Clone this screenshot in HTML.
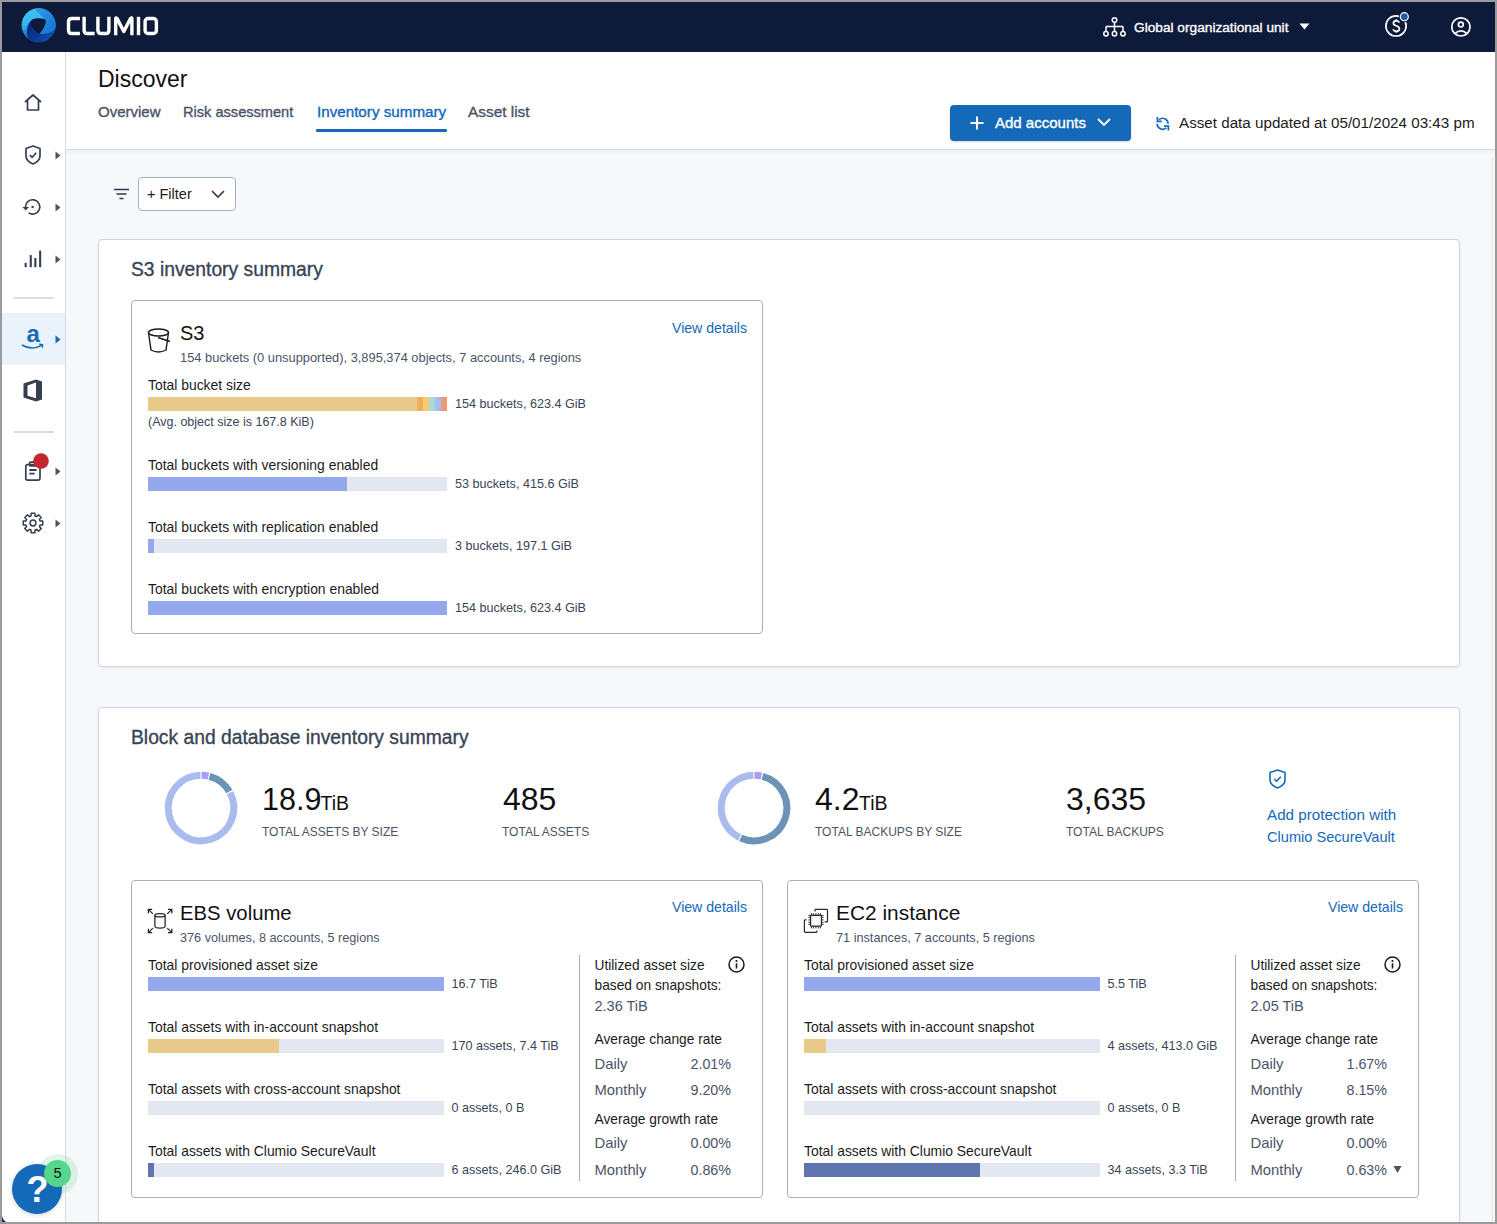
<!DOCTYPE html>
<html><head><meta charset="utf-8"><style>
html,body{margin:0;padding:0;}
body{width:1497px;height:1224px;overflow:hidden;background:#9a9a9a;position:relative;font-family:"Liberation Sans",sans-serif;}
.a{position:absolute;}
.t{position:absolute;white-space:nowrap;line-height:1;}
.m{-webkit-text-stroke:0.35px currentColor;}
.s{-webkit-text-stroke:0.15px currentColor;}
svg{position:absolute;overflow:visible;}
</style></head><body>
<div class="a" style="left:2px;top:2px;width:1493px;height:1220px;background:#f7f8fa;"></div>
<div class="a" style="left:2px;top:2px;width:1493px;height:50px;background:#0e1a39;"></div>
<div class="a" style="left:2px;top:52px;width:63px;height:1170px;background:#fff;"></div>
<div class="a" style="left:65px;top:52px;width:1px;height:1170px;background:#d3dbea;"></div>
<div class="a" style="left:66px;top:52px;width:1429px;height:97px;background:#fff;"></div>
<div class="a" style="left:66px;top:149px;width:1429px;height:1px;background:#d3dbea;"></div>
<div class="a" style="left:66px;top:150px;width:1429px;height:6px;background:linear-gradient(rgba(30,50,90,0.035),rgba(30,50,90,0));"></div>
<div class="a" style="left:1492px;top:157px;width:1px;height:1065px;background:#e3e3e3;"></div>
<div class="a" style="left:1493px;top:157px;width:2px;height:1065px;background:#f9f9f9;"></div>
<svg style="left:22px;top:8px" width="34" height="35" viewBox="0 0 34 35">
<defs><linearGradient id="lg1" x1="0.2" y1="0.1" x2="0.3" y2="0.9"><stop offset="0" stop-color="#40c2f2"/><stop offset="0.45" stop-color="#36b4ee"/><stop offset="1" stop-color="#1560c8"/></linearGradient>
<linearGradient id="lg3" x1="0" y1="0" x2="1" y2="1"><stop offset="0" stop-color="#2aa0ea"/><stop offset="1" stop-color="#1670d4"/></linearGradient>
<linearGradient id="lg2" x1="0" y1="0.2" x2="1" y2="0.8"><stop offset="0" stop-color="#08267a"/><stop offset="1" stop-color="#1250b0"/></linearGradient></defs>
<circle cx="16.6" cy="17.3" r="17" fill="url(#lg1)"/>
<path d="M12.2 0.9A17 17 0 0 1 33.2 21L20 25L24.2 12.6Z" fill="url(#lg3)"/>
<path d="M8.8 13Q4.6 16.5 4.8 26L6.6 31.05A17 17 0 0 0 33.1 21.4Q26 27 18.4 25.7Z" fill="url(#lg2)"/>
<path d="M8.9 14.2Q8.6 11.6 11.4 10.9Q16 9.7 21.6 10.8Q24.4 11.4 23.8 14.2Q22.6 20.5 17.6 25.2Q16.5 26.2 15.4 25.1Q9.4 20 8.9 14.2Z" fill="#0e1a39"/>
</svg>
<svg style="left:0px;top:0px" width="1" height="1" viewBox="0 0 1 1"><g fill="none" stroke="#fff" stroke-width="3.4">
<path d="M79.9 18.5H71.8Q68.5 18.5 68.5 21.8V30.2Q68.5 33.5 71.8 33.5H79.9"/>
<path d="M84.1 16.8V30.2Q84.1 33.5 87.4 33.5H94.6"/>
<path d="M97.9 16.8V30.2Q97.9 33.5 101.2 33.5H105.6Q108.9 33.5 108.9 30.2V16.8"/>
<path d="M115.7 35.2V18.8Q115.7 17.2 117 18.4L123.8 31.5L130.6 18.4Q131.9 17.2 131.9 18.8V35.2" stroke-linejoin="round"/>
<path d="M138.5 16.8V35.2"/>
<rect x="145.1" y="18.5" width="11.3" height="15" rx="3"/>
</g></svg>
<svg style="left:1103px;top:17px" width="23" height="20" viewBox="0 0 23 20" fill="none" stroke="#fff" stroke-width="1.5">
<circle cx="11.5" cy="3" r="2.3"/><path d="M11.5 5.3V9.5M3 9.5H20M3 9.5V14.5M11.5 9.5V14.5M20 9.5V14.5"/>
<circle cx="3" cy="16.7" r="2.2"/><circle cx="11.5" cy="16.7" r="2.2"/><circle cx="20" cy="16.7" r="2.2"/></svg>
<div class="t m" style="left:1134px;top:21.00px;font-size:13.7px;color:#fff;">Global organizational unit</div>
<svg style="left:1299px;top:23px" width="11" height="7" viewBox="0 0 11 7"><path d="M0.5 0.5H10.5L5.5 6.5Z" fill="#fff"/></svg>
<svg style="left:1380px;top:8px" width="34" height="34" viewBox="1380 8 34 34">
<circle cx="1396" cy="25.9" r="10.1" fill="none" stroke="#fff" stroke-width="1.7"/>
<path d="M1399.3 22.6Q1398.6 20.8 1396.3 20.8Q1393.4 20.8 1393.4 23.2Q1393.4 25 1396.3 25.8Q1399.4 26.7 1399.4 29Q1399.4 31.3 1396.3 31.3Q1393.8 31.3 1393 29.4M1396.3 19.3V20.8M1396.3 31.3V32.8" fill="none" stroke="#fff" stroke-width="1.7"/>
<circle cx="1404.3" cy="16.7" r="5.6" fill="#0e1a39"/><circle cx="1404.3" cy="16.7" r="4.6" fill="#fff"/><circle cx="1404.3" cy="16.7" r="3.4" fill="#1d5fa0"/></svg>
<svg style="left:1448px;top:14px" width="26" height="26" viewBox="1448 14 26 26" fill="none" stroke="#fff" stroke-width="1.7">
<circle cx="1460.9" cy="26.9" r="9.1"/><circle cx="1460.8" cy="24.6" r="2.4"/><path d="M1455 33.5Q1460.9 28.2 1466.8 33.5"/></svg>
<svg style="left:24px;top:94px" width="18" height="17" viewBox="0 0 18 17" fill="none" stroke="#353f50" stroke-width="1.7" stroke-linejoin="round">
<path d="M1 8L9 1L17 8M3.5 6V16H14.5V6"/></svg>
<svg style="left:25px;top:145px" width="16" height="20" viewBox="0 0 16 20" fill="none" stroke="#353f50" stroke-width="1.7" stroke-linejoin="round">
<path d="M8 1L15 3.5V11Q15 16 8 19Q1 16 1 11V3.5Z"/><path d="M4.8 10L7.2 12.3L11.3 7.8"/></svg>
<svg style="left:22px;top:199px" width="20" height="17" viewBox="0 0 20 17">
<path d="M3.4 7.9A7.2 7.2 0 1 1 6.6 13.9" fill="none" stroke="#353f50" stroke-width="1.6"/><path d="M0.4 8.1H7L3.7 11.6Z" fill="#353f50"/><circle cx="10.6" cy="7.9" r="1.2" fill="#353f50"/></svg>
<svg style="left:24px;top:250px" width="18" height="18" viewBox="0 0 18 18" fill="#353f50">
<rect x="0.6" y="12.8" width="2.1" height="4.4"/><rect x="5.7" y="5.1" width="2.1" height="12.1"/><rect x="10.3" y="8" width="2.1" height="9.2"/><rect x="15.1" y="0.7" width="2.1" height="16.5"/></svg>
<div class="a" style="left:2px;top:313px;width:63px;height:52px;background:#eaf3fc;"></div>
<svg style="left:55px;top:151px" width="6" height="9" viewBox="0 0 6 9"><path d="M0.5 0.5L5.5 4.5L0.5 8.5Z" fill="#4a5468"/></svg>
<svg style="left:55px;top:203px" width="6" height="9" viewBox="0 0 6 9"><path d="M0.5 0.5L5.5 4.5L0.5 8.5Z" fill="#4a5468"/></svg>
<svg style="left:55px;top:255px" width="6" height="9" viewBox="0 0 6 9"><path d="M0.5 0.5L5.5 4.5L0.5 8.5Z" fill="#4a5468"/></svg>
<svg style="left:55px;top:335px" width="6" height="9" viewBox="0 0 6 9"><path d="M0.5 0.5L5.5 4.5L0.5 8.5Z" fill="#1469b8"/></svg>
<svg style="left:55px;top:467px" width="6" height="9" viewBox="0 0 6 9"><path d="M0.5 0.5L5.5 4.5L0.5 8.5Z" fill="#4a5468"/></svg>
<svg style="left:55px;top:519px" width="6" height="9" viewBox="0 0 6 9"><path d="M0.5 0.5L5.5 4.5L0.5 8.5Z" fill="#4a5468"/></svg>
<div class="a" style="left:14px;top:297px;width:40px;height:1.5px;background:#d5deec;"></div>
<div class="t" style="left:26.5px;top:321.50px;font-size:24px;color:#1469b8;font-weight:bold;">a</div>
<svg style="left:21px;top:342px" width="24" height="8" viewBox="0 0 24 8"><path d="M1 3Q11 9 21 3.2" fill="none" stroke="#1469b8" stroke-width="1.5"/><path d="M18.2 2.2L21.6 2.6L21.2 5.8" fill="none" stroke="#1469b8" stroke-width="1.3"/></svg>
<svg style="left:23px;top:379px" width="20" height="23" viewBox="0 0 20 23" fill="#353f50">
<path d="M0.5 4.5L13 0.5L19 2.5V20.5L13 22.5L0.5 18.5Z M4.5 6.5V16.8L13 19.3V3.5Z" fill-rule="evenodd"/></svg>
<div class="a" style="left:14px;top:431px;width:40px;height:1.5px;background:#d5deec;"></div>
<svg style="left:24px;top:461px" width="18" height="21" viewBox="0 0 18 21" fill="none" stroke="#353f50" stroke-width="1.7" stroke-linejoin="round">
<rect x="1.8" y="3.6" width="14.2" height="15.6" rx="1.6"/><rect x="5.5" y="1.2" width="6.5" height="3.6" rx="1"/><path d="M5.3 9H12.6M5.3 12.6H10.6" stroke-width="1.9"/></svg>
<svg style="left:33px;top:453px" width="17" height="17" viewBox="0 0 17 17"><circle cx="8" cy="8" r="7.8" fill="#c1272e"/></svg>
<svg style="left:22px;top:512px" width="22" height="22" viewBox="0 0 22 22" fill="none" stroke="#353f50" stroke-width="1.5" stroke-linejoin="round">
<path d="M8.98 3.98L9.11 1.28L12.89 1.28L13.01 3.98L14.53 4.61L16.54 2.79L19.21 5.46L17.38 7.46L18.02 8.98L20.72 9.11L20.72 12.89L18.02 13.01L17.39 14.53L19.21 16.54L16.54 19.21L14.54 17.38L13.02 18.02L12.89 20.72L9.11 20.72L8.99 18.02L7.47 17.39L5.46 19.21L2.79 16.54L4.62 14.54L3.98 13.02L1.28 12.89L1.28 9.11L3.98 8.99L4.61 7.47L2.79 5.46L5.46 2.79L7.46 4.62Z"/>
<circle cx="11" cy="11" r="2.9"/></svg>
<div class="t" style="left:98px;top:68.00px;font-size:23px;color:#111;">Discover</div>
<div class="t m" style="left:98px;top:104.00px;font-size:15px;color:#4a5468;">Overview</div>
<div class="t m" style="left:183px;top:105.00px;font-size:14.6px;color:#4a5468;">Risk assessment</div>
<div class="t m" style="left:317px;top:104.00px;font-size:15.2px;color:#1469b8;">Inventory summary</div>
<div class="a" style="left:316px;top:129px;width:131px;height:3px;background:#1469b8;border-radius:1px;"></div>
<div class="t m" style="left:468px;top:104.00px;font-size:15.4px;color:#4a5468;">Asset list</div>
<div class="a" style="left:950px;top:105px;width:181px;height:36px;background:#1469b8;border-radius:4px;box-shadow:0 1px 2px rgba(0,0,0,0.15);"></div>
<svg style="left:969px;top:115px" width="16" height="16" viewBox="0 0 16 16"><path d="M8 1.5V14.5M1.5 8H14.5" stroke="#fff" stroke-width="2"/></svg>
<div class="t m" style="left:995px;top:115.00px;font-size:15px;color:#fff;">Add accounts</div>
<svg style="left:1097px;top:118px" width="14" height="9" viewBox="0 0 14 9"><path d="M1 1L7 7L13 1" fill="none" stroke="#fff" stroke-width="1.8"/></svg>
<svg style="left:1150px;top:110px" width="25" height="25" viewBox="1150 110 25 25" fill="none" stroke="#1469b8" stroke-width="1.6">
<path d="M1168.10 123.80A5.5 5.5 0 0 0 1158.92 119.71"/><path d="M1157.4 116.9V121.3H1161.8" stroke-width="1.7"/>
<path d="M1157.10 123.80A5.5 5.5 0 0 0 1166.28 127.89"/><path d="M1163.9 126.2H1168.4V130.6" stroke-width="1.7"/></svg>
<div class="t" style="left:1179px;top:115.00px;font-size:15.2px;color:#1b1b1b;">Asset data updated at 05/01/2024 03:43 pm</div>
<svg style="left:113px;top:188px" width="17" height="12" viewBox="0 0 17 12"><path d="M1 1.5H16M3.5 6H13.5M6.5 10.5H10.5" stroke="#2f3a4c" stroke-width="1.7"/></svg>
<div class="a" style="left:138px;top:177px;width:96px;height:32px;background:#fff;border:1px solid #9fb0cc;border-radius:4px;"></div>
<div class="t" style="left:147px;top:187.00px;font-size:14.5px;color:#1b1b1b;">+ Filter</div>
<svg style="left:211px;top:190px" width="14" height="9" viewBox="0 0 14 9"><path d="M1 1L7 7L13 1" fill="none" stroke="#2f3a4c" stroke-width="1.6"/></svg>
<div class="a" style="left:98px;top:239px;width:1360px;height:426px;background:#fff;border:1px solid #cdd6e8;border-radius:4px;box-shadow:0 1px 3px rgba(20,40,80,0.07);"></div>
<div class="t m" style="left:131px;top:260.00px;font-size:19.3px;color:#394456;">S3 inventory summary</div>
<div class="a" style="left:131px;top:300px;width:630px;height:332px;background:#fff;border:1px solid #a3b0c8;border-radius:4px;"></div>
<svg style="left:147px;top:328px" width="25" height="26" viewBox="0 0 25 26" fill="none" stroke="#1b1b1b" stroke-width="1.4">
<ellipse cx="11.5" cy="4.5" rx="10" ry="3.5"/><path d="M1.5 4.5L4 22Q11.5 26 19 22L21.5 4.5"/><path d="M11 9.5L23 13.5"/></svg>
<div class="t" style="left:180px;top:322.50px;font-size:20px;color:#111;">S3</div>
<div class="t" style="left:180px;top:352.00px;font-size:12.85px;color:#4a5468;">154 buckets (0 unsupported), 3,895,374 objects, 7 accounts, 4 regions</div>
<div class="t" style="left:672px;top:320.50px;font-size:14.1px;color:#1469b8;">View details</div>
<div class="t" style="left:148px;top:379.00px;font-size:13.9px;color:#1b1b1b;">Total bucket size</div>
<div class="a" style="left:148px;top:397px;width:299px;height:14px;background:#e3e7f2;"></div>
<div class="a" style="left:148px;top:397px;width:269px;height:14px;background:#e9c98a;"></div>
<div class="a" style="left:417px;top:397px;width:6px;height:14px;background:#efae57;"></div>
<div class="a" style="left:423px;top:397px;width:6px;height:14px;background:#f7cd70;"></div>
<div class="a" style="left:429px;top:397px;width:6px;height:14px;background:#a8d8d8;"></div>
<div class="a" style="left:435px;top:397px;width:6px;height:14px;background:#a9bbee;"></div>
<div class="a" style="left:441px;top:397px;width:6px;height:14px;background:#ec9a75;"></div>
<div class="t" style="left:455px;top:397.60px;font-size:12.6px;color:#394456;">154 buckets, 623.4 GiB</div>
<div class="t" style="left:148px;top:416.30px;font-size:12.5px;color:#394456;">(Avg. object size is 167.8 KiB)</div>
<div class="t" style="left:148px;top:459.00px;font-size:13.9px;color:#1b1b1b;">Total buckets with versioning enabled</div>
<div class="a" style="left:148px;top:477px;width:299px;height:14px;background:#e3e7f2;"></div>
<div class="a" style="left:148px;top:477px;width:199px;height:14px;background:#93a9ec;"></div>
<div class="t" style="left:455px;top:477.60px;font-size:12.6px;color:#394456;">53 buckets, 415.6 GiB</div>
<div class="t" style="left:148px;top:521.00px;font-size:13.9px;color:#1b1b1b;">Total buckets with replication enabled</div>
<div class="a" style="left:148px;top:539px;width:299px;height:14px;background:#e3e7f2;"></div>
<div class="a" style="left:148px;top:539px;width:6px;height:14px;background:#93a9ec;"></div>
<div class="t" style="left:455px;top:539.60px;font-size:12.6px;color:#394456;">3 buckets, 197.1 GiB</div>
<div class="t" style="left:148px;top:583.00px;font-size:13.9px;color:#1b1b1b;">Total buckets with encryption enabled</div>
<div class="a" style="left:148px;top:601px;width:299px;height:14px;background:#e3e7f2;"></div>
<div class="a" style="left:148px;top:601px;width:299px;height:14px;background:#93a9ec;"></div>
<div class="t" style="left:455px;top:601.60px;font-size:12.6px;color:#394456;">154 buckets, 623.4 GiB</div>
<div class="a" style="left:98px;top:707px;width:1360px;height:600px;background:#fff;border:1px solid #cdd6e8;border-radius:4px;box-shadow:0 1px 3px rgba(20,40,80,0.07);"></div>
<div class="t m" style="left:131px;top:728.00px;font-size:19.3px;color:#394456;">Block and database inventory summary</div>
<svg style="left:161px;top:768px" width="80" height="80" viewBox="0 0 80 80"><path d="M40.57 7.20A32.8 32.8 0 0 1 47.38 8.04" fill="none" stroke="#a99cf5" stroke-width="7"/><path d="M48.49 8.32A32.8 32.8 0 0 1 68.41 23.60" fill="none" stroke="#6b93b8" stroke-width="7"/><path d="M68.96 24.60A32.8 32.8 0 1 1 39.43 7.20" fill="none" stroke="#aabbed" stroke-width="7"/></svg>
<div class="t" style="left:262px;top:783.00px;font-size:32px;color:#111;transform:scaleX(0.955);transform-origin:0 0;">18.9</div>
<div class="t" style="left:320.5px;top:794.00px;font-size:19.5px;color:#111;">TiB</div>
<div class="t" style="left:262px;top:826.20px;font-size:12px;color:#4a5468;">TOTAL ASSETS BY SIZE</div>
<div class="t" style="left:503px;top:783.00px;font-size:32px;color:#111;">485</div>
<div class="t" style="left:502px;top:826.20px;font-size:12px;color:#4a5468;">TOTAL ASSETS</div>
<svg style="left:714px;top:767.5px" width="80" height="80" viewBox="0 0 80 80"><path d="M40.57 7.20A32.8 32.8 0 0 1 47.38 8.04" fill="none" stroke="#a99cf5" stroke-width="7"/><path d="M48.49 8.32A32.8 32.8 0 1 1 26.66 69.96" fill="none" stroke="#6b93b8" stroke-width="7"/><path d="M25.62 69.48A32.8 32.8 0 0 1 39.43 7.20" fill="none" stroke="#aabbed" stroke-width="7"/></svg>
<div class="t" style="left:815px;top:783.00px;font-size:32px;color:#111;">4.2</div>
<div class="t" style="left:859px;top:794.00px;font-size:19.5px;color:#111;">TiB</div>
<div class="t" style="left:815px;top:826.20px;font-size:12px;color:#4a5468;">TOTAL BACKUPS BY SIZE</div>
<div class="t" style="left:1066px;top:783.00px;font-size:32px;color:#111;">3,635</div>
<div class="t" style="left:1066px;top:826.20px;font-size:12px;color:#4a5468;">TOTAL BACKUPS</div>
<svg style="left:1269px;top:769px" width="17" height="20" viewBox="0 0 17 20" fill="none" stroke="#1469b8" stroke-width="1.6" stroke-linejoin="round">
<path d="M8.5 1L16 3.5V11Q16 16 8.5 19Q1 16 1 11V3.5Z"/><path d="M5.2 10L7.5 12.3L11.8 7.8"/></svg>
<div class="t" style="left:1267px;top:807.00px;font-size:15.2px;color:#1469b8;">Add protection with</div>
<div class="t" style="left:1267px;top:829.50px;font-size:14.6px;color:#1469b8;">Clumio SecureVault</div>
<div class="a" style="left:131px;top:880px;width:630px;height:316px;background:#fff;border:1px solid #a3b0c8;border-radius:4px;"></div>
<svg style="left:147px;top:908px" width="26" height="26" viewBox="0 0 26 26" fill="none" stroke="#222" stroke-width="1.25">
<path d="M1.4 5.2V1.4H5.2M1.4 1.4L5.9 5.9M21 1.4H24.8V5.2M24.8 1.4L20.3 5.9M1.4 20.8V24.6H5.2M1.4 24.6L5.9 20.1M24.8 20.8V24.6H21M24.8 24.6L20.3 20.1"/>
<ellipse cx="13" cy="7.2" rx="5.1" ry="1.7"/><path d="M7.9 7.2V18.2Q7.9 20 13 20Q18.1 20 18.1 18.2V7.2"/></svg>
<div class="t" style="left:180px;top:902.50px;font-size:20.3px;color:#111;">EBS volume</div>
<div class="t" style="left:180px;top:932.00px;font-size:12.7px;color:#4a5468;">376 volumes, 8 accounts, 5 regions</div>
<div class="t" style="left:672px;top:900.00px;font-size:14.1px;color:#1469b8;">View details</div>
<div class="t" style="left:148px;top:959.00px;font-size:13.9px;color:#1b1b1b;">Total provisioned asset size</div>
<div class="a" style="left:148px;top:977px;width:296px;height:14px;background:#e3e7f2;"></div>
<div class="a" style="left:148px;top:977px;width:296px;height:14px;background:#93a9ec;"></div>
<div class="t" style="left:451.5px;top:977.60px;font-size:12.6px;color:#394456;">16.7 TiB</div>
<div class="t" style="left:148px;top:1021.00px;font-size:13.9px;color:#1b1b1b;">Total assets with in-account snapshot</div>
<div class="a" style="left:148px;top:1039px;width:296px;height:14px;background:#e3e7f2;"></div>
<div class="a" style="left:148px;top:1039px;width:131px;height:14px;background:#e9c98a;"></div>
<div class="t" style="left:451.5px;top:1039.60px;font-size:12.6px;color:#394456;">170 assets, 7.4 TiB</div>
<div class="t" style="left:148px;top:1083.00px;font-size:13.9px;color:#1b1b1b;">Total assets with cross-account snapshot</div>
<div class="a" style="left:148px;top:1101px;width:296px;height:14px;background:#e3e7f2;"></div>
<div class="t" style="left:451.5px;top:1101.60px;font-size:12.6px;color:#394456;">0 assets, 0 B</div>
<div class="t" style="left:148px;top:1145.00px;font-size:13.9px;color:#1b1b1b;">Total assets with Clumio SecureVault</div>
<div class="a" style="left:148px;top:1163px;width:296px;height:14px;background:#e3e7f2;"></div>
<div class="a" style="left:148px;top:1163px;width:6px;height:14px;background:#5f75b0;"></div>
<div class="t" style="left:451.5px;top:1163.60px;font-size:12.6px;color:#394456;">6 assets, 246.0 GiB</div>
<div class="a" style="left:579px;top:955px;width:1px;height:226px;background:#a3b0c8;"></div>
<div class="t" style="left:594.5px;top:959.00px;font-size:13.75px;color:#1b1b1b;">Utilized asset size</div>
<div class="t" style="left:594.5px;top:979.00px;font-size:13.75px;color:#1b1b1b;">based on snapshots:</div>
<div class="t" style="left:594.5px;top:998.50px;font-size:14.5px;color:#4a5468;">2.36 TiB</div>
<svg style="left:728px;top:956px" width="17" height="17" viewBox="0 0 17 17"><circle cx="8.5" cy="8.5" r="7.5" fill="none" stroke="#1b1b1b" stroke-width="1.5"/><circle cx="8.5" cy="5" r="1.1" fill="#1b1b1b"/><path d="M8.5 7.3V12.5" stroke="#1b1b1b" stroke-width="1.6"/></svg>
<div class="t" style="left:594.5px;top:1033.00px;font-size:13.75px;color:#1b1b1b;">Average change rate</div>
<div class="t" style="left:594.5px;top:1056.70px;font-size:14.8px;color:#4a5468;">Daily</div>
<div class="t" style="left:594.5px;top:1082.80px;font-size:14.8px;color:#4a5468;">Monthly</div>
<div class="t" style="left:594.5px;top:1112.80px;font-size:13.75px;color:#1b1b1b;">Average growth rate</div>
<div class="t" style="left:594.5px;top:1136.40px;font-size:14.8px;color:#4a5468;">Daily</div>
<div class="t" style="left:594.5px;top:1162.50px;font-size:14.8px;color:#4a5468;">Monthly</div>
<div class="t" style="left:531px;width:200px;text-align:right;top:1056.70px;font-size:14.3px;color:#4a5468;">2.01%</div>
<div class="t" style="left:531px;width:200px;text-align:right;top:1082.80px;font-size:14.3px;color:#4a5468;">9.20%</div>
<div class="t" style="left:531px;width:200px;text-align:right;top:1136.40px;font-size:14.3px;color:#4a5468;">0.00%</div>
<div class="t" style="left:531px;width:200px;text-align:right;top:1162.50px;font-size:14.3px;color:#4a5468;">0.86%</div>
<div class="a" style="left:787px;top:880px;width:630px;height:316px;background:#fff;border:1px solid #a3b0c8;border-radius:4px;"></div>
<svg style="left:800px;top:904px" width="32" height="34" viewBox="0 0 32 34" fill="none" stroke="#2a2a2a" stroke-width="1.2">
<rect x="10.6" y="11.4" width="10.8" height="10.8" rx="0.6"/>
<path d="M11.4 9.2V11.4M11.4 22.2V24.4M8.4 11.4H10.6M21.4 11.4H23.6M13.4 9.2V11.4M13.4 22.2V24.4M8.4 13.4H10.6M21.4 13.4H23.6M15.9 9.2V11.4M15.9 22.2V24.4M8.4 15.9H10.6M21.4 15.9H23.6M18.3 9.2V11.4M18.3 22.2V24.4M8.4 18.3H10.6M21.4 18.3H23.6M20.4 9.2V11.4M20.4 22.2V24.4M8.4 20.4H10.6M21.4 20.4H23.6" stroke-width="1"/>
<path d="M15 7.4V6.2Q15 5.4 15.8 5.4H26.7Q27.5 5.4 27.5 6.2V17Q27.5 17.9 26.6 17.9H24.6"/>
<path d="M6.4 15.9H5.2Q4.4 15.9 4.4 16.7V27.5Q4.4 28.3 5.2 28.3H16Q16.9 28.3 16.9 27.4V26.4"/>
</svg>
<div class="t" style="left:836px;top:902.50px;font-size:20.9px;color:#111;">EC2 instance</div>
<div class="t" style="left:836px;top:932.00px;font-size:12.7px;color:#4a5468;">71 instances, 7 accounts, 5 regions</div>
<div class="t" style="left:1328px;top:900.00px;font-size:14.1px;color:#1469b8;">View details</div>
<div class="t" style="left:804px;top:959.00px;font-size:13.9px;color:#1b1b1b;">Total provisioned asset size</div>
<div class="a" style="left:804px;top:977px;width:296px;height:14px;background:#e3e7f2;"></div>
<div class="a" style="left:804px;top:977px;width:296px;height:14px;background:#93a9ec;"></div>
<div class="t" style="left:1107.5px;top:977.60px;font-size:12.6px;color:#394456;">5.5 TiB</div>
<div class="t" style="left:804px;top:1021.00px;font-size:13.9px;color:#1b1b1b;">Total assets with in-account snapshot</div>
<div class="a" style="left:804px;top:1039px;width:296px;height:14px;background:#e3e7f2;"></div>
<div class="a" style="left:804px;top:1039px;width:22px;height:14px;background:#e9c98a;"></div>
<div class="t" style="left:1107.5px;top:1039.60px;font-size:12.6px;color:#394456;">4 assets, 413.0 GiB</div>
<div class="t" style="left:804px;top:1083.00px;font-size:13.9px;color:#1b1b1b;">Total assets with cross-account snapshot</div>
<div class="a" style="left:804px;top:1101px;width:296px;height:14px;background:#e3e7f2;"></div>
<div class="t" style="left:1107.5px;top:1101.60px;font-size:12.6px;color:#394456;">0 assets, 0 B</div>
<div class="t" style="left:804px;top:1145.00px;font-size:13.9px;color:#1b1b1b;">Total assets with Clumio SecureVault</div>
<div class="a" style="left:804px;top:1163px;width:296px;height:14px;background:#e3e7f2;"></div>
<div class="a" style="left:804px;top:1163px;width:176px;height:14px;background:#5f75b0;"></div>
<div class="t" style="left:1107.5px;top:1163.60px;font-size:12.6px;color:#394456;">34 assets, 3.3 TiB</div>
<div class="a" style="left:1235px;top:955px;width:1px;height:226px;background:#a3b0c8;"></div>
<div class="t" style="left:1250.5px;top:959.00px;font-size:13.75px;color:#1b1b1b;">Utilized asset size</div>
<div class="t" style="left:1250.5px;top:979.00px;font-size:13.75px;color:#1b1b1b;">based on snapshots:</div>
<div class="t" style="left:1250.5px;top:998.50px;font-size:14.5px;color:#4a5468;">2.05 TiB</div>
<svg style="left:1384px;top:956px" width="17" height="17" viewBox="0 0 17 17"><circle cx="8.5" cy="8.5" r="7.5" fill="none" stroke="#1b1b1b" stroke-width="1.5"/><circle cx="8.5" cy="5" r="1.1" fill="#1b1b1b"/><path d="M8.5 7.3V12.5" stroke="#1b1b1b" stroke-width="1.6"/></svg>
<div class="t" style="left:1250.5px;top:1033.00px;font-size:13.75px;color:#1b1b1b;">Average change rate</div>
<div class="t" style="left:1250.5px;top:1056.70px;font-size:14.8px;color:#4a5468;">Daily</div>
<div class="t" style="left:1250.5px;top:1082.80px;font-size:14.8px;color:#4a5468;">Monthly</div>
<div class="t" style="left:1250.5px;top:1112.80px;font-size:13.75px;color:#1b1b1b;">Average growth rate</div>
<div class="t" style="left:1250.5px;top:1136.40px;font-size:14.8px;color:#4a5468;">Daily</div>
<div class="t" style="left:1250.5px;top:1162.50px;font-size:14.8px;color:#4a5468;">Monthly</div>
<div class="t" style="left:1187px;width:200px;text-align:right;top:1056.70px;font-size:14.3px;color:#4a5468;">1.67%</div>
<div class="t" style="left:1187px;width:200px;text-align:right;top:1082.80px;font-size:14.3px;color:#4a5468;">8.15%</div>
<div class="t" style="left:1187px;width:200px;text-align:right;top:1136.40px;font-size:14.3px;color:#4a5468;">0.00%</div>
<div class="t" style="left:1187px;width:200px;text-align:right;top:1162.50px;font-size:14.3px;color:#4a5468;">0.63%</div>
<svg style="left:1393px;top:1165px" width="9" height="9" viewBox="0 0 9 9"><path d="M0.5 1H8.5L4.5 8Z" fill="#4a5468"/></svg>
<div class="a" style="left:38px;top:1154px;width:40px;height:40px;background:rgba(84,214,140,0.2);border-radius:50%;"></div>
<div class="a" style="left:12px;top:1164px;width:50px;height:50px;background:#1469b8;border-radius:50%;box-shadow:0 1px 5px rgba(0,0,0,0.18);"></div>
<div class="t" style="left:26.5px;top:1172.00px;font-size:36px;color:#fff;font-weight:bold;">?</div>
<div class="a" style="left:44px;top:1160px;width:27px;height:27px;background:#56d68c;border-radius:50%;"></div>
<div class="t" style="left:53.5px;top:1166.30px;font-size:14.5px;color:#111;">5</div>
<div class="a" style="left:0px;top:0px;width:1497px;height:2px;background:#9a9a9a;"></div>
<div class="a" style="left:0px;top:1222px;width:1497px;height:2px;background:#9a9a9a;"></div>
<div class="a" style="left:0px;top:0px;width:2px;height:1224px;background:#9a9a9a;"></div>
<div class="a" style="left:1495px;top:0px;width:2px;height:1224px;background:#9a9a9a;"></div>
<svg style="left:2px;top:1214px" width="6" height="8" viewBox="0 0 6 8"><path d="M0 1.5Q0.8 6 4.2 8H0Z" fill="#1e2c4c"/></svg>
</body></html>
